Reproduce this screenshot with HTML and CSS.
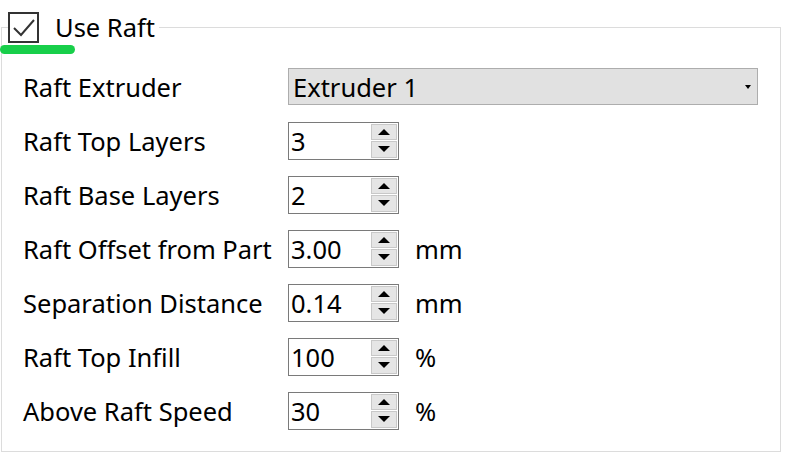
FILE: index.html
```html
<!DOCTYPE html>
<html>
<head>
<meta charset="utf-8">
<link rel="stylesheet" href="styles.css">
</head>
<body>
<fieldset class="group">
  <legend class="group-title">
    <span class="check">
      <svg width="27" height="27" viewBox="0 0 27 27"><path d="M4 14 L11 21 L24 6" fill="none" stroke="#333" stroke-width="2"/></svg>
    </span>
    <span class="title-text">Use Raft</span>
    <span class="highlight"></span>
  </legend>
  <div class="rows">
    <div class="row">
      <span class="label">Raft Extruder</span>
      <div class="combo"><span>Extruder 1</span><span class="combo-arrow"></span></div>
    </div>
    <div class="row">
      <span class="label">Raft Top Layers</span>
      <div class="spin"><span class="spin-val">3</span><span class="spin-btns"><span class="btn up"></span><span class="btn down"></span></span></div>
    </div>
    <div class="row">
      <span class="label">Raft Base Layers</span>
      <div class="spin"><span class="spin-val">2</span><span class="spin-btns"><span class="btn up"></span><span class="btn down"></span></span></div>
    </div>
    <div class="row">
      <span class="label">Raft Offset from Part</span>
      <div class="spin"><span class="spin-val">3.00</span><span class="spin-btns"><span class="btn up"></span><span class="btn down"></span></span></div>
      <span class="unit">mm</span>
    </div>
    <div class="row">
      <span class="label">Separation Distance</span>
      <div class="spin"><span class="spin-val">0.14</span><span class="spin-btns"><span class="btn up"></span><span class="btn down"></span></span></div>
      <span class="unit">mm</span>
    </div>
    <div class="row">
      <span class="label">Raft Top Infill</span>
      <div class="spin"><span class="spin-val">100</span><span class="spin-btns"><span class="btn up"></span><span class="btn down"></span></span></div>
      <span class="unit">%</span>
    </div>
    <div class="row">
      <span class="label">Above Raft Speed</span>
      <div class="spin"><span class="spin-val">30</span><span class="spin-btns"><span class="btn up"></span><span class="btn down"></span></span></div>
      <span class="unit">%</span>
    </div>
  </div>
</fieldset>
</body>
</html>
```
FILE: styles.css
```css
html, body {
  margin: 0;
  padding: 0;
  background: #fff;
}
body {
  font-family: "Noto Sans", "DejaVu Sans", sans-serif;
  font-size: 25.5px;
  color: #000;
  width: 790px;
  height: 467px;
  overflow: hidden;
}
.group {
  box-sizing: border-box;
  margin: 11px 0 0 1px;
  width: 780px;
  height: 441px;
  border: 1px solid #dcdcdc;
  padding: 0 0 0 21px;
}
.group-title {
  position: relative;
  margin-left: -15px;
  padding: 0 4px 0 0;
  display: flex;
  align-items: center;
  height: 32px;
}
.check {
  box-sizing: border-box;
  width: 31px;
  height: 31px;
  border: 2px solid #333;
  display: flex;
  align-items: center;
  justify-content: center;
}
.check svg { display: block; }
.title-text {
  margin-left: 16px;
  line-height: 32px;
}
.highlight {
  position: absolute;
  left: -8px;
  top: 34px;
  width: 75px;
  height: 9px;
  border-radius: 5px;
  background: #18cf4a;
}
.rows {
  display: flex;
  flex-direction: column;
  gap: 17px;
  padding-top: 25px;
}
.row {
  display: flex;
  align-items: center;
  height: 37px;
}
.label {
  width: 265px;
  flex: none;
  white-space: nowrap;
}
.combo {
  box-sizing: border-box;
  width: 470px;
  height: 37px;
  background: #e1e1e1;
  border: 1px solid #adadad;
  display: flex;
  align-items: center;
  justify-content: space-between;
  padding: 0 6px 0 4px;
}
.combo-arrow {
  width: 0;
  height: 0;
  border-left: 3px solid transparent;
  border-right: 3px solid transparent;
  border-top: 4px solid #000;
}
.spin {
  box-sizing: border-box;
  width: 111px;
  height: 38px;
  border: 1px solid #7a7a7a;
  display: flex;
  align-items: center;
  justify-content: space-between;
  padding: 1px 1px 1px 2px;
}
.spin-btns {
  display: flex;
  flex-direction: column;
  width: 26px;
  height: 34px;
  gap: 1px;
}
.btn {
  box-sizing: border-box;
  flex: 1;
  background: #e5e5e5;
  border: 1px solid #c8c8c8;
  display: flex;
  align-items: center;
  justify-content: center;
}
.btn::after {
  content: "";
  width: 0;
  height: 0;
  border-left: 6px solid transparent;
  border-right: 6px solid transparent;
}
.btn.up::after { border-bottom: 6px solid #000; }
.btn.down::after { border-top: 6px solid #000; }
.unit {
  margin-left: 16px;
}
```
